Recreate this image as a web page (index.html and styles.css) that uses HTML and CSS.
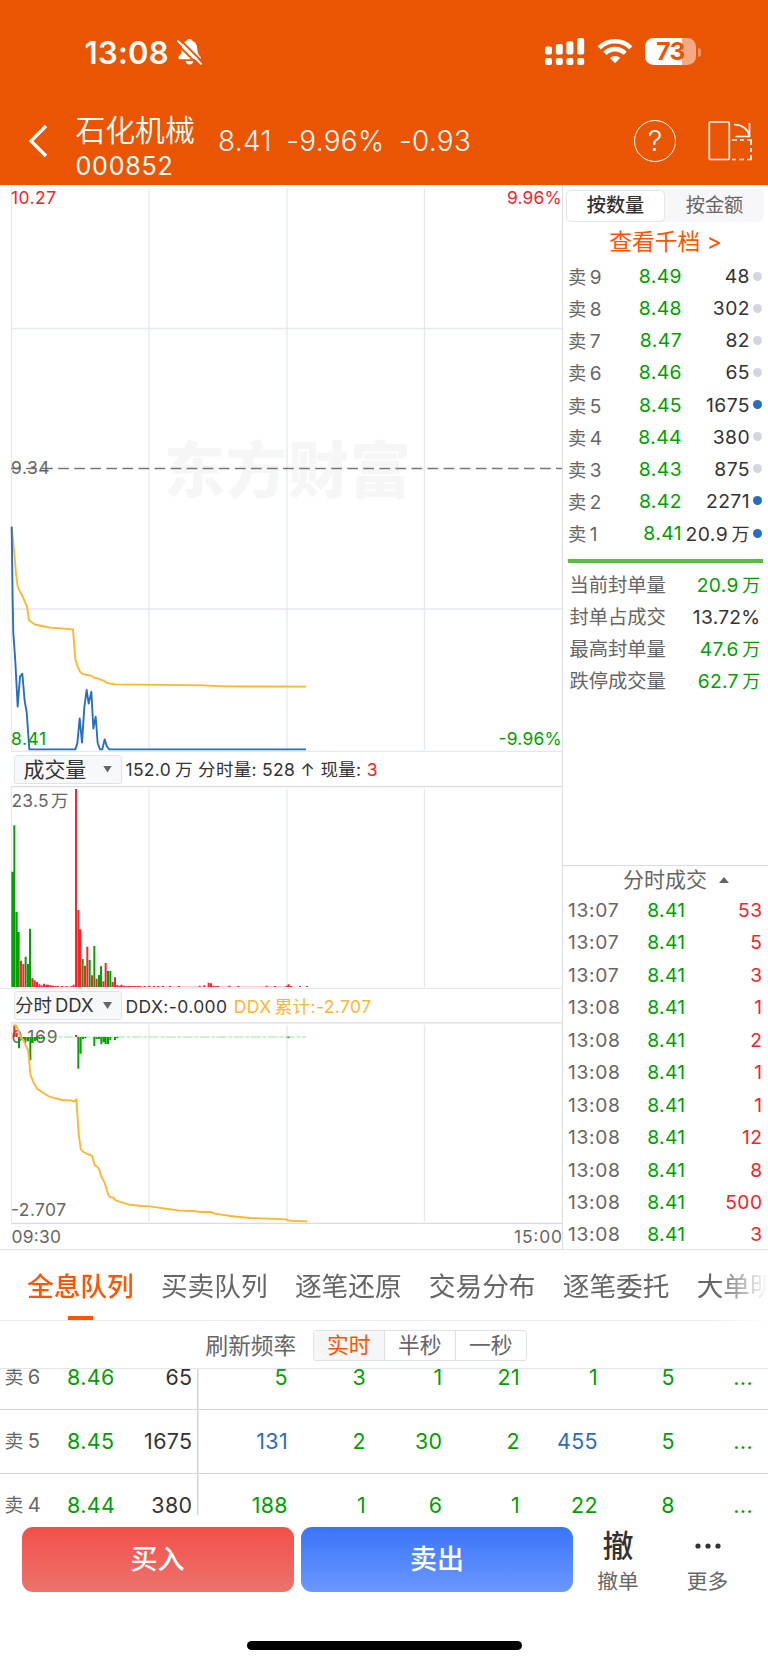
FILE: index.html
```html
<!DOCTYPE html>
<html lang="zh-CN">
<head>
<meta charset="utf-8">
<title>石化机械 000852</title>
<link rel="stylesheet" href="styles.css">
</head>
<body>
<header class="header">
  <div class="status">
    <span class="clock">13:08</span>
    <svg class="bell" width="26" height="28" viewBox="0 0 26 28"><path d="M12.500 1c-1.800 0-3 1-3.400 2.300C5.900 4.300 5 7 4.800 11c-.2 4-1 5.500-3 7.500-1 1.300-.5 2.700 1 2.700h19.500c1.500 0 2-1.400 1-2.700-2-2-2.800-3.500-3-7.500-.2-4-1.400-6.700-4.400-7.700C15.400 2 14.300 1 12.500 1zM8.500 23h8c-.5 2.300-2 3.600-4 3.600s-3.500-1.300-4-3.600z" fill="#fff"/><path d="M-.5 5.500L21.500 27.500M3 1.500L26 24.500" stroke="#ea5504" stroke-width="1.800"/><path d="M.8 3L24 25.800" stroke="#fff" stroke-width="2" stroke-linecap="round"/></svg>
    <svg class="cell" width="40" height="28" viewBox="0 0 40 28" fill="#fff"><rect x="0" y="8.500" width="7" height="8" rx="2"/><rect x="10.800" y="6" width="7" height="10.500" rx="2"/><rect x="21.400" y="3.200" width="7" height="13.300" rx="2"/><rect x="32.200" y="0" width="7" height="16.500" rx="2"/><rect x="0" y="20" width="7" height="7" rx="2"/><rect x="10.800" y="20" width="7" height="7" rx="2"/><rect x="21.400" y="20" width="7" height="7" rx="2"/><rect x="32.200" y="20" width="7" height="7" rx="2"/></svg>
    <svg class="wifi" width="36" height="26" viewBox="0 0 36 26"><g fill="none" stroke="#fff" stroke-width="4.600"><path d="M2.200 9.800a22.300 22.300 0 0 1 31.600 0"/><path d="M7.900 15.300a14.300 14.300 0 0 1 20.200 0"/></g><path d="M18 25.200l-5.200-5.100a7.500 7.500 0 0 1 10.400 0z" fill="#fff"/></svg>
    <div class="battery"><span>73</span></div><i class="nub"></i>
  </div>
  <div class="title">
    <svg class="back" width="20" height="34" viewBox="0 0 20 34"><path d="M18 2L3 17l15 15" fill="none" stroke="#fff" stroke-width="3.300"/></svg>
    <div class="stock"><div class="name">石化机械</div><div class="code">000852</div></div>
    <div class="quote"><span>8.41</span><span>-9.96%</span><span>-0.93</span></div>
    <div class="help"><span>?</span></div>
    <svg class="rotate" width="44" height="42" viewBox="0 0 44 42" fill="none" stroke="#fff" stroke-width="1.700"><rect x="1.300" y="2" width="20" height="37.500" rx="1"/><path d="M26 4.500c9 .5 14 4 15.500 12M41.500 3v13.500H27.500"/><path d="M24 20h5m3 0h4m3 0h4v5m0 3v4m0 3v4.500h-4m-3 0h-5m-3 0h-4"/></svg>
  </div>
</header>

<main class="market">
  <section class="charts">
    <svg class="chart" width="562" height="567" viewBox="0 185 562 567">
      <text class="mark" x="164" y="493" textLength="247">东方财富</text>
      <path class="grid" d="M11.500 186V751.500H562M149 188V750M287 188V750M424.500 188V750M11 328.500H562M11 609H562"/>
      <path class="dash" d="M11 468.500H562"/>
      <g transform="translate(0 500) scale(.33333)" class="line">
        <path class="avg" d="M35 80L43 160L48 220L53 260L60 275L67 287L74 304L81 320L87 361L97 368L106 374L125 378L150 383L180 385L219 388L226 478L233 500L240 515L250 523L274 527L281 533L295 536L303 540L310 542L318 547L330 551L345 553L425 554L610 556L680 559L918 560"/>
        <path class="price" d="M35 80L38 300L40 400L46 485L53 620L60 530L67 521L74 603L80 636L88 748H226L232 730L239 655L246 728L253 622L260 570L266 611L274 575L280 686L287 650L293 729L300 748H307L314 718L320 738L328 748H918"/>
      </g>
      <g class="tick"><text class="red" x="11" y="203.800" textLength="45">10.27</text><text class="red" x="507" y="203.800" textLength="54.500">9.96%</text><text x="11" y="474.300" textLength="38.500">9.34</text><text class="green" x="11" y="745" textLength="35">8.41</text><text class="green" x="498.500" y="745" textLength="63">-9.96%</text></g>
    </svg>
    <div class="bar"><div class="pick"><span>成交量</span><i></i></div><p>152.0<b>万</b> 分时量: 528 ↑ 现量: <em>3</em></p></div>
    <svg class="chart" width="562" height="202" viewBox="0 786 562 202">
      <path class="grid" d="M11.500 787V988M149 789V987M287 789V987M424.500 789V987"/><path class="edge" d="M11 786.700H562"/>
      <g transform="translate(0 780) scale(.33333)" class="bars">
        <path class="up" d="M63 621V542M70 621V552M97 621V594M104 621V601M111 621V606M118 621V613M125 621V616M132 621V611M139 621V614M145 621V614M152 621V616M159 621V617M166 621V618M173 621V617M186 621V618M200 621V618M214 621V618M221 621V614M228 621V27M235 621V390M241 621V448M255 621V557M262 621V500M276 621V586M290 621V596M310 621V604M317 621V549M338 621V606M345 621V592M352 621V615M359 621V617M365 621V614M372 621V617M379 621V618M386 621V618M393 621V618M400 621V618M407 621V618M414 621V618M421 621V618M434 621V618M448 621V617M462 621V618M475 621V618M489 621V618M510 621V618M537 621V618M599 621V617M613 621V616M626 621V608M633 621V610M640 621V617M647 621V618M654 621V618M688 621V617M715 621V618M800 621V617M825 621V618M860 621V617M866 621V613M873 621V618M900 621V618M921 621V618"/>
        <path class="base" d="M90 620.500H885"/>
        <path class="down" d="M37 621V275M43 621V136M50 621V396M56 621V456M77 621V530M84 621V552M90 621V446M248 621V537M269 621V540M283 621V498M297 621V585M303 621V559M324 621V573M331 621V573"/>
      </g>
      <g class="tick"><text x="11.500" y="806.500" textLength="37">23.5</text><text x="51" y="806.500">万</text></g>
    </svg>
    <div class="bar bar2"><div class="pick tight"><span>分时<u>DDX</u></span><i></i></div><p class="ddx">DDX:-0.000 <strong>DDX<b>累计</b>:-2.707</strong></p></div>
    <svg class="chart" width="562" height="227" viewBox="0 1022 562 227">
      <path class="grid" d="M11.500 1023V1222M149 1025V1222M287 1025V1222M424.500 1025V1222"/><path class="edge" d="M11 1022.800H562M11 1223.300H562"/>
      <g class="tick"><text x="11.500" y="1042.500" textLength="46">0.169</text><text x="11" y="1216" textLength="55">-2.707</text><text x="11.500" y="1243.300" textLength="49.500">09:30</text><text x="514" y="1243.300" textLength="48">15:00</text></g>
      <g transform="translate(0 1010) scale(.33333)" class="bars">
        <path class="base2" d="M140 81H918" />
        <path class="down" d="M57 81V115M64 81V90M71 81V92M77 81V92M84 81V94M91 81V151M98 81V98M105 81V93M111 81V90M118 81V87M125 81V87M132 81V86M235 81V176M242 81V131M249 81V87M256 81V85M283 81V108M290 81V87M297 81V87M304 81V103M311 81V97M317 81V102M324 81V102M331 81V90M345 81V90M352 81V85M865 80V84"/>
        <path class="up" d="M43 45V81M50 68V81M228 75V81"/>
      </g>
      <path class="ddxline" transform="translate(0 1010) scale(.33333)" d="M41 45L50 48L58 70L64 86L70 89L77 106L84 120L87 145L91 192L98 212L111 236L130 249L146 259L168 265L186 270L212 271L222 275L229 268L236 370L242 417L250 426L262 432L276 437L284 466L290 469L297 477L304 500L311 513L318 530L325 555L331 562H339L347 571L365 577L387 584L425 588L450 589L490 595L540 602L580 603L603 606L630 606L645 611L690 618L750 624L858 628L864 631L885 633L921 634"/>
    </svg>
  </section>
  <aside class="side">
    <div class="switch"><span class="on">按数量</span><span>按金额</span></div>
    <div class="more">查看千档 &gt;</div>
    <div class="book">
      <div><span>卖<b>9</b></span><em>8.49</em><strong>48</strong><i></i></div>
      <div><span>卖<b>8</b></span><em>8.48</em><strong>302</strong><i></i></div>
      <div><span>卖<b>7</b></span><em>8.47</em><strong>82</strong><i></i></div>
      <div><span>卖<b>6</b></span><em>8.46</em><strong>65</strong><i></i></div>
      <div><span>卖<b>5</b></span><em>8.45</em><strong>1675</strong><i class="big"></i></div>
      <div><span>卖<b>4</b></span><em>8.44</em><strong>380</strong><i></i></div>
      <div><span>卖<b>3</b></span><em>8.43</em><strong>875</strong><i></i></div>
      <div><span>卖<b>2</b></span><em>8.42</em><strong>2271</strong><i class="big"></i></div>
      <div><span>卖<b>1</b></span><em>8.41</em><strong>20.9<b>万</b></strong><i class="big"></i></div>
    </div>
    <div class="stats">
      <div><span>当前封单量</span><em>20.9<b>万</b></em></div>
      <div><span>封单占成交</span><em class="dark">13.72%</em></div>
      <div><span>最高封单量</span><em>47.6<b>万</b></em></div>
      <div><span>跌停成交量</span><em>62.7<b>万</b></em></div>
    </div>
    <div class="dealhead">分时成交<i></i></div>
    <div class="deals">
      <div><span>13:07</span><em>8.41</em><strong>53</strong></div>
      <div><span>13:07</span><em>8.41</em><strong>5</strong></div>
      <div><span>13:07</span><em>8.41</em><strong>3</strong></div>
      <div><span>13:08</span><em>8.41</em><strong>1</strong></div>
      <div><span>13:08</span><em>8.41</em><strong>2</strong></div>
      <div><span>13:08</span><em>8.41</em><strong>1</strong></div>
      <div><span>13:08</span><em>8.41</em><strong>1</strong></div>
      <div><span>13:08</span><em>8.41</em><strong>12</strong></div>
      <div><span>13:08</span><em>8.41</em><strong>8</strong></div>
      <div><span>13:08</span><em>8.41</em><strong>500</strong></div>
      <div><span>13:08</span><em>8.41</em><strong>3</strong></div>
    </div>
  </aside>
</main>

<nav class="tabs"><span class="on">全息队列</span><span>买卖队列</span><span>逐笔还原</span><span>交易分布</span><span>逐笔委托</span><span>大单明</span></nav>
<div class="rate"><span>刷新频率</span><div class="seg"><span class="on">实时</span><span>半秒</span><span>一秒</span></div></div>
<div class="queue">
  <div class="row first"><span>卖<b>6</b></span><em>8.46</em><strong>65</strong><em>5</em><em>3</em><em>1</em><em>21</em><em>1</em><em>5</em><em>...</em></div>
  <div class="row"><span>卖<b>5</b></span><em>8.45</em><strong>1675</strong><em class="blue">131</em><em>2</em><em>30</em><em>2</em><em class="blue">455</em><em>5</em><em>...</em></div>
  <div class="row last"><span>卖<b>4</b></span><em>8.44</em><strong>380</strong><em>188</em><em>1</em><em>6</em><em>1</em><em>22</em><em>8</em><em>...</em></div>
</div>
<footer class="actions">
  <div class="btn buy">买入</div><div class="btn sell">卖出</div>
  <div class="act"><span class="glyph">撤</span><span>撤单</span></div>
  <div class="act"><span class="glyph"><svg width="28" height="8" viewBox="0 0 28 8" fill="#333"><circle cx="4" cy="4" r="2.600"/><circle cx="14" cy="4" r="2.600"/><circle cx="24" cy="4" r="2.600"/></svg></span><span>更多</span></div>
</footer>
<div class="home"></div>
</body>
</html>
```
FILE: styles.css
```css
* { box-sizing: border-box; }
body { margin: 0; width: 768px; height: 1665px; overflow: hidden; background: #fff; color: #666; font-family: Inter, "Noto Sans CJK SC", sans-serif; font-weight: 380; white-space: nowrap; }
em, i, b, strong, u { font-style: normal; font-weight: inherit; text-decoration: none; }
p { margin: 0; }
svg { display: block; flex: none; }

.header { height: 185px; background: #ea5504; color: #fff; }
.status { height: 96px; display: flex; align-items: flex-start; padding: 38px 0 0 84.5px; }
.clock { width: 85px; font-size: 31px; line-height: 29px; font-weight: 600; letter-spacing: .3px; }
.bell { margin-left: 7.500px; }
.cell { margin-left: 342px; }
.wifi { margin-left: 12px; }
.battery { margin-left: 12px; width: 51px; height: 27px; border-radius: 8.5px; background: linear-gradient(90deg, #fff 37px, #f6aa82 37px); text-align: center; }
.battery span { color: #ea5504; font-size: 24.500px; line-height: 27px; font-weight: 700; letter-spacing: -.5px; }
.nub { width: 3px; height: 9px; margin: 9.500px 0 0 2px; border-radius: 0 4px 4px 0; background: #f2935f; }
.title { height: 89px; display: flex; align-items: flex-start; }
.back { margin: 28px 0 0 28px; }
.stock { margin: 16px 0 0 27.500px; width: 142.500px; }
.name { font-size: 29.800px; line-height: 36px; height: 38.500px; font-weight: 350; }
.code { font-size: 25px; line-height: 30px; letter-spacing: .8px; }
.quote { display: flex; gap: 14.500px; width: 416px; margin-top: 28px; font-size: 27.800px; line-height: 34px; font-weight: 330; letter-spacing: .4px; }
.help { width: 42px; height: 42px; margin-top: 24px; border: 1.500px solid #fff; border-radius: 50%; font-size: 29px; line-height: 39px; text-align: center; font-weight: 300; flex: none; }
.rotate { margin: 24px 0 0 31.500px; }

.market { display: flex; height: 1065px; border-bottom: 1px solid #e4e4e4; }
.charts { width: 562px; flex: none; }
.mark { font-size: 61px; font-weight: 900; fill: #f6f6f6; }
.grid { fill: none; stroke: #e4e8ef; stroke-width: 1.300; }
.edge { fill: none; stroke: #d9dce4; stroke-width: 1.300; }
.dash { stroke: #777; stroke-width: 1.300; stroke-dasharray: 10.700 5.360; stroke-dashoffset: 1; }
.line path, .ddxline { fill: none; stroke-width: 5.600; stroke-linejoin: round; }
.line .avg, .ddxline { stroke: #ffb52e; }
.line .price { stroke: #286dc0; }
.tick { font-size: 17.400px; fill: #666; }
.red { fill: #f4222b; }
.green { fill: #009f00; }
.bars path { stroke-width: 6; }
.bars .up { stroke: #f4282c; }
.bars .down { stroke: #05a005; }
.bars .base { stroke: #f4282c; stroke-width: 1; }
.bars .base2 { stroke: #80cc80; stroke-width: 2; stroke-dasharray: 30 5 12 4; }
.bar { height: 34px; display: flex; align-items: center; padding-left: 14px; gap: 3.500px; font-size: 17.500px; letter-spacing: .3px; color: #333; }
.bar p { padding-bottom: 1px; }
.bar em { color: #f4222b; }
.bar b { margin-left: 4px; }
.bar2 { border-top: 1px solid #e4e8ef; }
.pick { width: 108px; height: 29px; border: 1px solid #dfe2e8; border-radius: 3px; background: #f7f8fa; display: flex; align-items: center; justify-content: space-between; padding: 0 9px 0 8.500px; font-size: 20.900px; letter-spacing: 0; line-height: 27px; }
.pick i { width: 9px; height: 7px; background: #666; clip-path: polygon(0 0, 100% 0, 50% 100%); }
.tight { padding-left: 0; font-size: 18.500px; }
.tight u { margin-left: 3px; }
.ddx { letter-spacing: .4px; }
.ddx strong { color: #ffb52e; margin-left: 1px; }
.ddx strong b { margin-left: 3px; }

.side { flex: 1; border-left: 1.500px solid #dcdcdf; }
.switch { display: flex; margin: 5px 4px 0 3px; height: 32px; border-radius: 5px; background: #f7f7fa; font-size: 19.200px; line-height: 29px; text-align: center; }
.switch span { flex: 1; border: 1px solid transparent; }
.switch .on { background: #fff; border-color: #e6e6ea; border-radius: 5px; color: #333; font-weight: 500; }
.more { height: 38px; text-align: center; font-size: 22.800px; line-height: 39.500px; color: #ff5500; }
.book { height: 302.500px; margin: 0 5px 0 5px; border-bottom: 4px solid #56bd3d; font-size: 19.300px; letter-spacing: .45px; }
.book div { height: 32.130px; display: grid; grid-template-columns: 44px 70px 1fr 13px; align-items: center; }
.book span { font-size: 18.200px; }
.book span b { margin-left: 3px; font-size: 19px; }
.book em { color: #009f00; text-align: right; }
.book strong { color: #333; text-align: right; margin-left: -10px; }
.book strong b, .stats em b { margin-left: 3.500px; font-size: 18px; }
.book i { width: 9px; height: 9px; margin-left: 2.500px; border-radius: 50%; background: #d3d7dd; }
.book .big { background: #286dc0; }
.stats { height: 302.500px; padding: 6px 7.500px 0 6.500px; font-size: 19.200px; }
.stats div { display: flex; justify-content: space-between; height: 32.130px; line-height: 32px; }
.stats em { color: #009f00; letter-spacing: .3px; }
.stats .dark { color: #333; }
.stats span { font-size: 19.300px; }
.dealhead { height: 29px; border-top: 1.500px solid #d9dce4; display: flex; align-items: center; justify-content: flex-start; gap: 12px; padding-left: 60px; font-size: 21px; line-height: 28px; }
.dealhead i { width: 10px; height: 6px; background: #666; clip-path: polygon(50% 0, 100% 100%, 0 100%); }
.deals { padding: 0 5.500px 0 5px; font-size: 19.200px; letter-spacing: .35px; }
.deals div { display: grid; grid-template-columns: 61px 56.500px 1fr; height: 32.450px; line-height: 32px; }
.deals em { color: #009f00; text-align: right; }
.deals span { letter-spacing: .7px; }
.deals strong { color: #f4222b; text-align: right; letter-spacing: .5px; }

.tabs { height: 71px; border-bottom: 1.500px solid #ecedf2; display: flex; gap: 27.200px; padding: 17px 0 0 27px; overflow: hidden; font-size: 26.700px; line-height: 38px; -webkit-mask-image: linear-gradient(90deg, #000 715px, transparent 768px); mask-image: linear-gradient(90deg, #000 715px, transparent 768px); }
.tabs .on { color: #ff5500; font-weight: 500; height: 52.500px; background: linear-gradient(#ff5500, #ff5500) 50% 100% / 25px 4px no-repeat; }
.rate { height: 48px; border-bottom: 1px solid #e4e6eb; display: flex; padding: 9px 0 0 205.500px; font-size: 22.700px; line-height: 31px; gap: 16.500px; }
.seg { width: 214px; height: 31px; display: flex; border: 1.300px solid #dfe2e8; border-radius: 3px; font-size: 21.800px; line-height: 29px; text-align: center; }
.seg span { flex: 1; }
.seg span + span { border-left: 1px solid #dfe2e8; }
.seg .on { color: #ff5500; background: #f5f6f8; }
.queue { height: 146px; overflow: hidden; font-size: 21.400px; letter-spacing: .4px; background: linear-gradient(#d3d5de, #d3d5de) 197px 0 / 1.500px 100% no-repeat; }
.row { height: 64.200px; line-height: 62px; display: grid; grid-template-columns: 67px 45px 80.500px 95.500px 78px 76.500px 77.500px 78px 77px 78px; border-bottom: 1px solid #d3d5de; text-align: right; }
.row.first { margin-top: -23px; }
.row.last { border: 0; }
.row span { text-align: left; padding-left: 4.500px; font-size: 18.800px; }
.row span b { margin-left: 4px; font-size: 20px; }
.row em { color: #009f00; }
.row .blue { color: #286dc0; }
.row strong { color: #333; }
.actions { height: 78px; display: flex; padding: 12px 0 0 21.500px; }
.btn { width: 272px; height: 65px; border-radius: 11px; color: #fff; font-size: 27px; line-height: 65px; text-align: center; flex: none; font-weight: 500; }
.buy { background: linear-gradient(#f2504a, #ec736c); }
.sell { margin-left: 7.500px; background: linear-gradient(#3a74f8, #6b98ff); }
.act { width: 89px; margin-left: .5px; text-align: center; font-size: 20.700px; line-height: 28px; flex: none; }
.act span { display: block; }
.act .glyph { height: 41px; font-size: 31px; line-height: 37px; color: #333; font-weight: 500; }
.act svg { margin: 0 auto; padding-top: 15px; height: 23px; }
.home { width: 275px; height: 9px; margin: 48px 0 0 246.500px; border-radius: 5px; background: #000; }
```
